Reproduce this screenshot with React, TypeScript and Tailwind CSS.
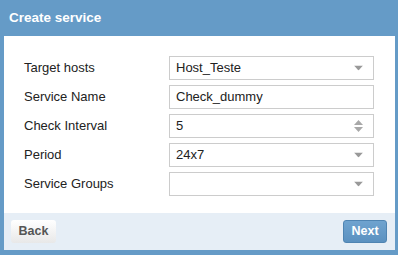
import React from "react";

function Arrow() {
  return (
    <svg width="9" height="5" viewBox="0 0 9 5" className="absolute right-[10px] top-1/2 -translate-y-1/2">
      <path d="M0 0 L9 0 L4.5 5 Z" fill="#999" />
    </svg>
  );
}

function Spinner() {
  return (
    <svg width="9" height="12" viewBox="0 0 9 12" className="absolute right-[10px] top-1/2 -translate-y-1/2">
      <path d="M0 5 L9 5 L4.5 0 Z" fill="#a8a8a8" />
      <path d="M0 7 L9 7 L4.5 12 Z" fill="#a8a8a8" />
    </svg>
  );
}

function Field({ value, kind }: { value: string; kind: "select" | "text" | "number" }) {
  return (
    <div className="relative h-[24px] w-[205px] border border-[#cccccc] bg-white flex items-center pl-[6px] text-[13px] text-[#222]">
      <span>{value}</span>
      {kind === "select" && <Arrow />}
      {kind === "number" && <Spinner />}
    </div>
  );
}

export default function App() {
  const rows: { label: string; value: string; kind: "select" | "text" | "number" }[] = [
    { label: "Target hosts", value: "Host_Teste", kind: "select" },
    { label: "Service Name", value: "Check_dummy", kind: "text" },
    { label: "Check Interval", value: "5", kind: "number" },
    { label: "Period", value: "24x7", kind: "select" },
    { label: "Service Groups", value: "", kind: "select" },
  ];
  return (
    <div
      className="w-[398px] h-[255px] bg-[#659bc7] flex flex-col"
      style={{ fontFamily: '"Liberation Sans", Arial, sans-serif' }}
    >
      <div className="h-[36px] flex items-center pl-[9px] text-white font-bold text-[13.5px]">
        Create service
      </div>
      <div className="ml-[4px] mr-[3px] bg-white pt-[20px] pb-[17px] pl-[20px] flex flex-col gap-[5px]">
        {rows.map((r) => (
          <div key={r.label} className="flex items-center">
            <div className="w-[145px] text-[13px] text-[#222]">{r.label}</div>
            <Field value={r.value} kind={r.kind} />
          </div>
        ))}
      </div>
      <div className="ml-[4px] mr-[3px] h-[37px] bg-[#e6eef6] flex items-center justify-between pl-[7px] pr-[8px]">
        <button className="h-[23px] w-[45px] rounded-[3px] bg-gradient-to-b from-[#ffffff] to-[#e8e8e8] text-[#555] font-bold text-[12.5px]">
          Back
        </button>
        <button className="h-[23px] w-[44px] rounded-[3px] border border-[#4f84b2] bg-gradient-to-b from-[#6fa3cf] to-[#5b91c0] text-white font-bold text-[12.5px]">
          Next
        </button>
      </div>
    </div>
  );
}
